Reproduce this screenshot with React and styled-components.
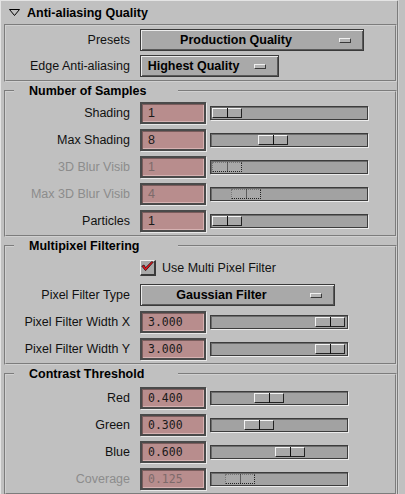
import styled, { createGlobalStyle } from "styled-components";

const GlobalStyle = createGlobalStyle`
  * { box-sizing: border-box; }
  body {
    margin: 0;
    background: #c0c0c0;
    font-family: "Liberation Sans", Arial, sans-serif;
  }
`;

const Window = styled.div`
  width: 405px;
  height: 494px;
  overflow: hidden;
  background: #c0c0c0;
`;

const Panel = styled.div`
  width: 399px;
  min-height: 494px;
  padding: 0 0 0 3px;
  border-top: 1px solid #e4e4e4;
  border-left: 1px solid #e4e4e4;
  border-right: 2px groove #d0d0d0;
`;

const Header = styled.div`
  height: 23px;
  display: flex;
  align-items: center;
  gap: 6px;
  padding-left: 4px;
  font-size: 12.5px;
  font-weight: bold;
  color: #000;
`;

const Box = styled.div`
  width: 393px;
  border: 2px groove #d0d0d0;
  padding: 3px 0 3px;
  display: grid;
  grid-template-columns: 124px auto;
  column-gap: 10px;
  row-gap: 4px;
  align-items: center;
`;

const Frame = styled.fieldset`
  width: 393px;
  margin: ${(p) => p.$top}px 0 0;
  padding: 0 0 ${(p) => p.$bottom}px;
  border: 2px groove #d0d0d0;
  min-width: 0;
`;

const Legend = styled.legend`
  width: 164px;
  margin-left: 8px;
  padding: 0 0 0 15px;
  height: 14px;
  line-height: 14px;
  font-size: 12.5px;
  font-weight: bold;
  color: #000;
`;

const Rows = styled.div`
  padding-top: ${(p) => p.$pad}px;
  display: grid;
  grid-template-columns: 124px auto;
  column-gap: 10px;
  row-gap: 5px;
  align-items: center;
`;

const Label = styled.div`
  text-align: right;
  font-size: 12.5px;
  color: ${(p) => (p.$off ? "#8c8c8c" : "#111")};
  white-space: nowrap;
`;

const Controls = styled.div`
  display: flex;
  align-items: center;
  gap: 4px;
`;

const Option = styled.div`
  width: ${(p) => p.$w}px;
  height: 22px;
  display: flex;
  align-items: center;
  background: #a9a9a9;
  border: 1px solid #3a3a3a;
  box-shadow: inset 1px 1px 0 #ececec, inset -1px -1px 0 #5a5a5a;
  font-size: 12.5px;
  font-weight: bold;
  color: #000;
`;

const OptionText = styled.span`
  flex: 1;
  text-align: center;
`;

const Indicator = styled.span`
  width: 12px;
  height: 5px;
  margin: 0 12px 0 8px;
  background: #b4b4b4;
  border-top: 1px solid #f0f0f0;
  border-left: 1px solid #f0f0f0;
  border-bottom: 1px solid #3a3a3a;
  border-right: 1px solid #3a3a3a;
`;

const Field = styled.div`
  width: 66px;
  height: 22px;
  display: flex;
  align-items: center;
  padding-left: 6px;
  background: #b88d8d;
  border: 2px solid #4a4a4a;
  box-shadow: 1px 1px 0 #e8e8e8, inset 1px 1px 0 #7a5c5c, inset -1px -1px 0 #d6b2b2;
  font-family: ${(p) => (p.$mono ? '"DejaVu Sans Mono", monospace' : '"Liberation Sans", Arial, sans-serif')};
  font-size: ${(p) => (p.$mono ? "11.5px" : "12.5px")};
  color: ${(p) => (p.$off ? "#7d6a6a" : "#1a1a1a")};
`;

const Trough = styled.div`
  position: relative;
  width: ${(p) => p.$w}px;
  height: 14px;
  background: #a2a2a2;
  border: 1px solid #3c3c3c;
  box-shadow: 1px 1px 0 #ececec, inset 1px 1px 0 #6c6c6c;
`;

const Thumb = styled.div`
  position: absolute;
  top: 1px;
  width: 30px;
  height: 10px;
  background: #a8a8a8;
  border-top: 1px solid ${(p) => (p.$off ? "#777" : "#f4f4f4")};
  border-left: 1px solid ${(p) => (p.$off ? "#777" : "#f4f4f4")};
  border-bottom: 1px solid #222;
  border-right: 1px solid #222;
  border-style: ${(p) => (p.$off ? "dotted" : "solid")};
  &::after {
    content: "";
    position: absolute;
    left: 14px;
    top: -1px;
    bottom: -1px;
    width: 1px;
    background: #111;
    opacity: ${(p) => (p.$off ? 0.5 : 1)};
  }
`;

const CheckRow = styled.label`
  display: flex;
  align-items: center;
  gap: 6px;
  height: 22px;
  font-size: 12.5px;
  color: #111;
`;

const CheckBox = styled.span`
  width: 16px;
  height: 16px;
  background: #a9a9a9;
  border-top: 1px solid #f0f0f0;
  border-left: 1px solid #f0f0f0;
  border-bottom: 2px solid #3a3a3a;
  border-right: 2px solid #3a3a3a;
  display: flex;
  overflow: visible;
`;

const Triangle = () => (
  <svg width="13" height="9" viewBox="0 0 13 9">
    <polygon points="1.5,1.5 11.5,1.5 6.5,7.5" fill="none" stroke="#000" strokeWidth="1" />
  </svg>
);

const Check = () => (
  <svg width="17" height="15" viewBox="0 0 17 15" style={{ margin: "-2px 0 0 0" }}>
    <path d="M1 7 L4 5.5 L6 9 L14 1 L16 2 L6 13 Z" fill="#e0141c" stroke="#000" strokeWidth="0.8" />
  </svg>
);

const Slider = ({ w, at, off }) => (
  <Trough $w={w}>
    <Thumb $off={off} style={{ left: at }} />
  </Trough>
);

const ValueRow = ({ label, value, mono, off, w, at }) => (
  <>
    <Label $off={off}>{label}</Label>
    <Controls>
      <Field $mono={mono} $off={off}>{value}</Field>
      <Slider w={w} at={at} off={off} />
    </Controls>
  </>
);

const samples = [
  { label: "Shading", value: "1", at: 1 },
  { label: "Max Shading", value: "8", at: 47 },
  { label: "3D Blur Visib", value: "1", at: 1, off: true },
  { label: "Max 3D Blur Visib", value: "4", at: 20, off: true },
  { label: "Particles", value: "1", at: 1 },
];

const contrast = [
  { label: "Red", value: "0.400", at: 43 },
  { label: "Green", value: "0.300", at: 33 },
  { label: "Blue", value: "0.600", at: 64 },
  { label: "Coverage", value: "0.125", at: 14, off: true },
];

export default function App() {
  return (
    <Window>
      <GlobalStyle />
      <Panel>
        <Header>
          <Triangle />
          Anti-aliasing Quality
        </Header>
        <Box>
          <Label>Presets</Label>
          <Option $w={224}>
            <OptionText>Production Quality</OptionText>
            <Indicator />
          </Option>
          <Label>Edge Anti-aliasing</Label>
          <Option $w={139}>
            <OptionText>Highest Quality</OptionText>
            <Indicator />
          </Option>
        </Box>

        <Frame $top={2} $bottom={3}>
          <Legend>Number of Samples</Legend>
          <Rows $pad={4}>
            {samples.map((s) => (
              <ValueRow key={s.label} {...s} w={158} />
            ))}
          </Rows>
        </Frame>

        <Frame $top={2} $bottom={3}>
          <Legend>Multipixel Filtering</Legend>
          <Rows $pad={4}>
            <span />
            <CheckRow>
              <CheckBox>
                <Check />
              </CheckBox>
              Use Multi Pixel Filter
            </CheckRow>
            <Label>Pixel Filter Type</Label>
            <Option $w={195}>
              <OptionText>Gaussian Filter</OptionText>
              <Indicator />
            </Option>
            <ValueRow label="Pixel Filter Width X" value="3.000" mono w={138} at={104} />
            <ValueRow label="Pixel Filter Width Y" value="3.000" mono w={138} at={104} />
          </Rows>
        </Frame>

        <Frame $top={2} $bottom={3}>
          <Legend>Contrast Threshold</Legend>
          <Rows $pad={6}>
            {contrast.map((c) => (
              <ValueRow key={c.label} {...c} mono w={138} />
            ))}
          </Rows>
        </Frame>
      </Panel>
    </Window>
  );
}
